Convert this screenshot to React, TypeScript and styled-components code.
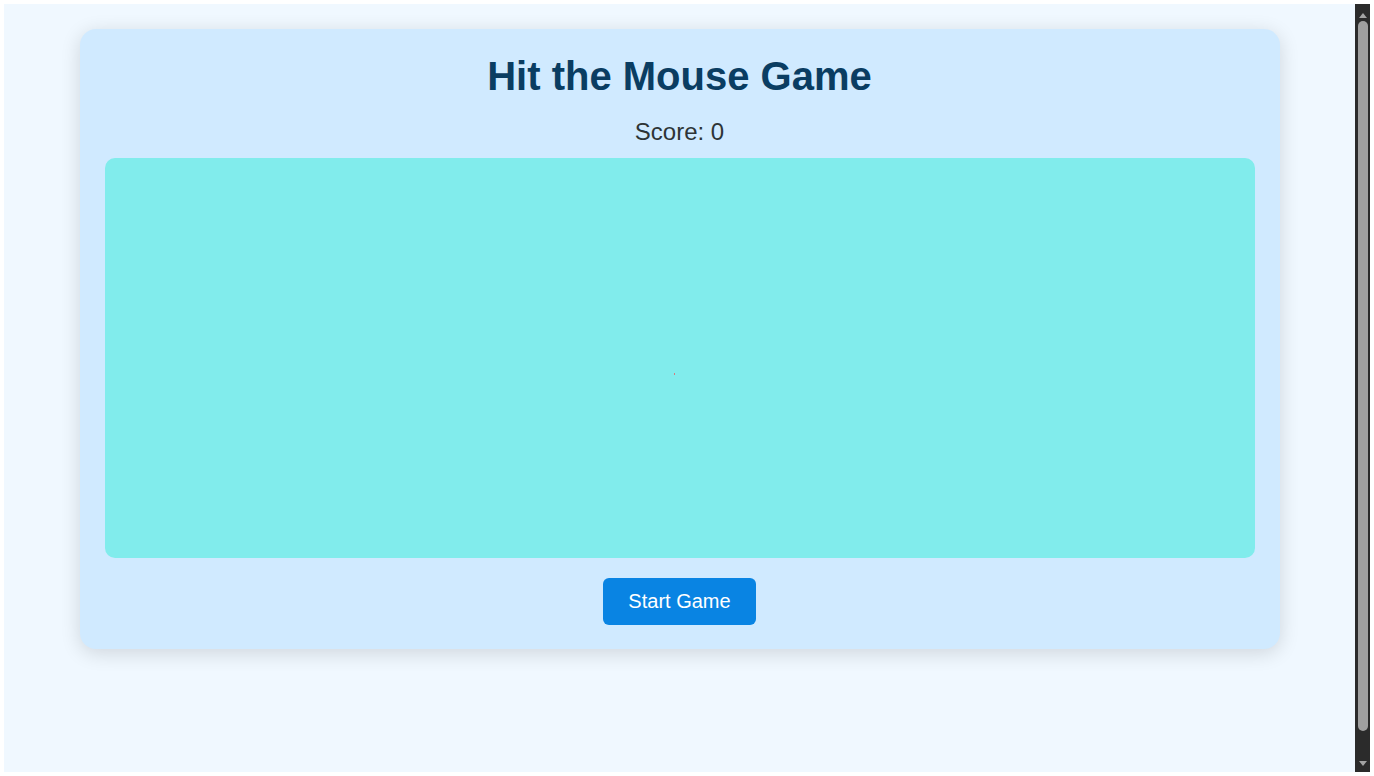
import React from 'react'
import styled, { createGlobalStyle } from 'styled-components'

const GlobalStyle = createGlobalStyle`
  html, body {
    margin: 0;
    padding: 0;
    background: #ffffff;
  }

  body {
    padding: 4px;
    font-family: 'Liberation Sans', Arial, sans-serif;
  }
`

const Frame = styled.div`
  display: flex;
  width: 1366px;
  height: 768px;
  overflow: hidden;
  background: #f0f8ff;
`

const Page = styled.div`
  flex: 1;
  min-width: 0;
  box-sizing: border-box;
  padding-top: 25px;
  background: #f0f8ff;
`

// the browser's dark scrollbar, drawn since the page scrolls a little
const ScrollBar = styled.div`
  width: 15px;
  display: flex;
  flex-direction: column;
  background: #2b2b2b;
`

const ScrollButton = styled.div<{ $down?: boolean }>`
  height: 17px;
  display: flex;
  justify-content: center;
  align-items: ${p => (p.$down ? 'flex-start' : 'flex-end')};
  padding: ${p => (p.$down ? '6px 0 0' : '0 0 3px')};
  box-sizing: border-box;

  &::before {
    content: '';
    width: 0;
    height: 0;
    border-left: 4px solid transparent;
    border-right: 4px solid transparent;
    ${p =>
      p.$down
        ? 'border-top: 5px solid #a3a3a3;'
        : 'border-bottom: 5px solid #a3a3a3;'}
  }
`

const ScrollTrack = styled.div`
  flex: 1;
  padding: 0 2px 0 3px;
`

const ScrollThumb = styled.div<{ $ratio: number }>`
  height: ${p => p.$ratio * 100}%;
  background: #a0a0a0;
  border-radius: 5px;
`

const Card = styled.div`
  max-width: 1200px;
  margin: 0 auto;
  padding: 25px 25px 24px;
  box-sizing: border-box;
  background: #d0eaff;
  border-radius: 16px;
  box-shadow: 0 4px 20px rgba(0, 0, 0, 0.14);
  display: flex;
  flex-direction: column;
  align-items: center;
`

const Title = styled.h1`
  margin: 0 0 19px;
  font-size: 40px;
  font-weight: bold;
  color: #0a3d62;
`

const Score = styled.div`
  margin: 0 0 12px;
  font-size: 24px;
  color: #2d3436;
`

const Field = styled.div`
  position: relative;
  align-self: stretch;
  height: 400px;
  background: #81ecec;
  border-radius: 10px;
`

// the mouse, still shrunk to a speck before the game starts
const Mouse = styled.div<{ $x: number; $y: number }>`
  position: absolute;
  left: ${p => p.$x}%;
  top: ${p => p.$y}%;
  width: 1px;
  height: 2px;
  background: #d9787c;
`

const StartButton = styled.button`
  margin-top: 20px;
  padding: 12px 25px;
  font-family: 'Liberation Sans', Arial, sans-serif;
  font-size: 20px;
  color: #ffffff;
  background: #0984e3;
  border: none;
  border-radius: 6px;
  cursor: pointer;
`

export default function App() {
  return (
    <>
      <GlobalStyle />
      <Frame>
        <Page>
          <Card>
            <Title>Hit the Mouse Game</Title>
            <Score>Score: 0</Score>
            <Field>
              <Mouse $x={49.5} $y={53.8} />
            </Field>
            <StartButton>Start Game</StartButton>
          </Card>
        </Page>
        <ScrollBar>
          <ScrollButton />
          <ScrollTrack>
            <ScrollThumb $ratio={0.967} />
          </ScrollTrack>
          <ScrollButton $down />
        </ScrollBar>
      </Frame>
    </>
  )
}
